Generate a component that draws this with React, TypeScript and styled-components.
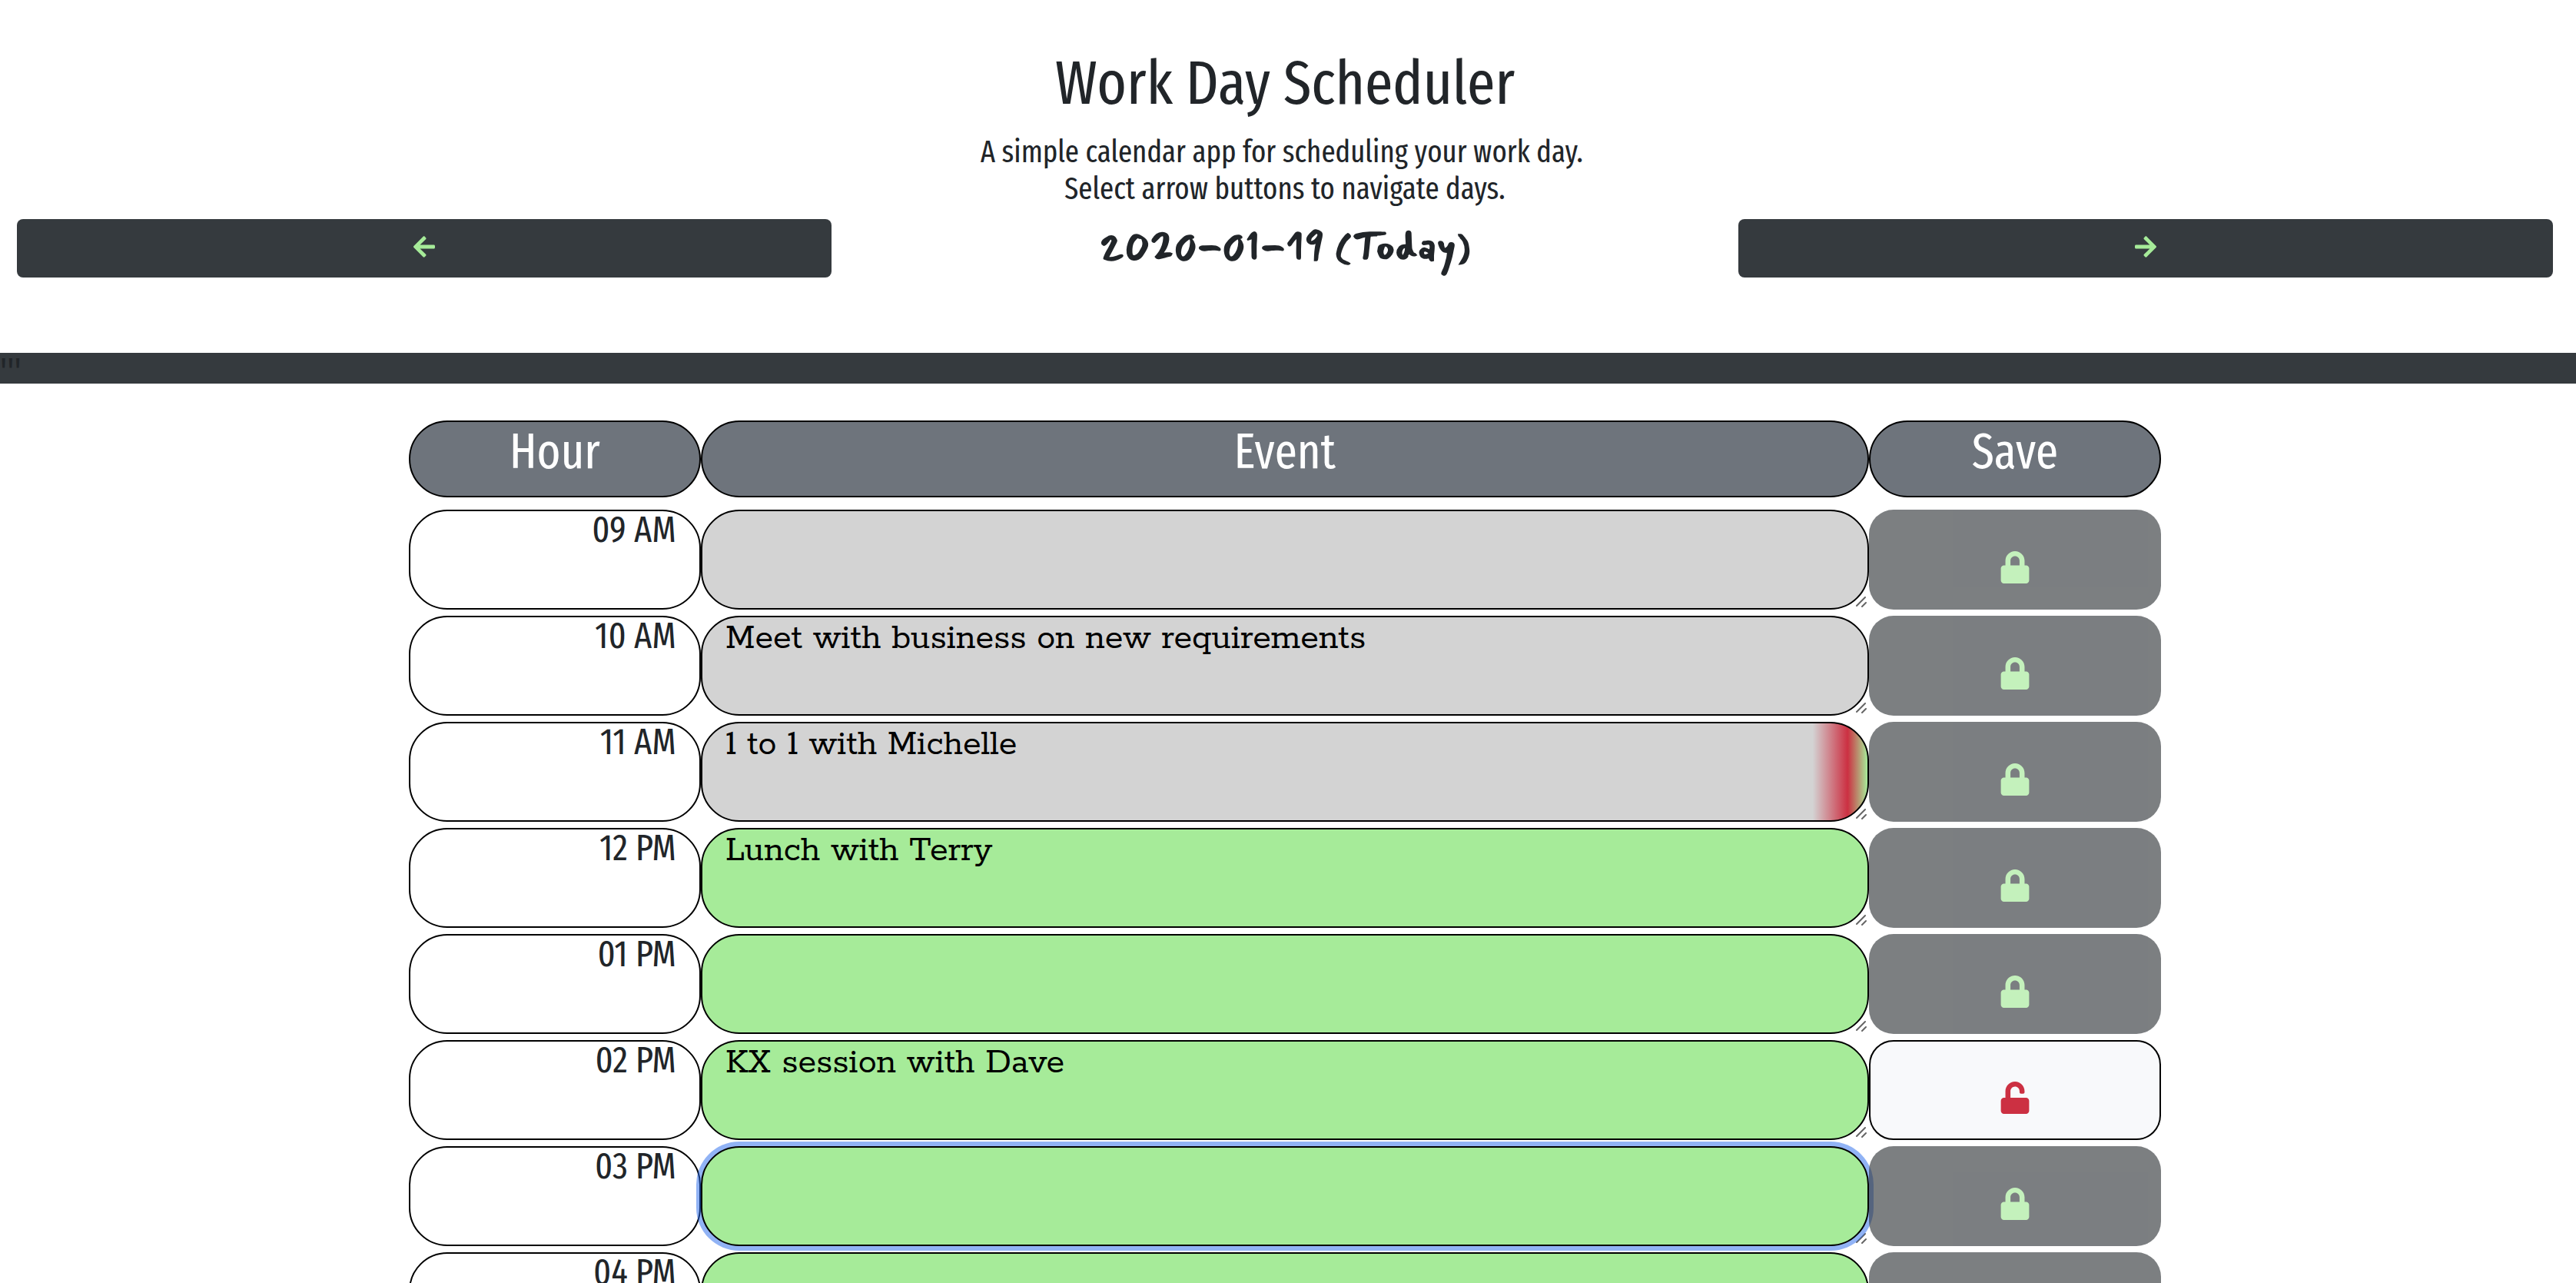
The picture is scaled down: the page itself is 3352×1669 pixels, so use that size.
import React, { useState } from "react";
import styled, { createGlobalStyle } from "styled-components";
import { FaArrowLeft, FaArrowRight, FaLock, FaUnlock } from "react-icons/fa";

const sans = `"Fira Sans Extra Condensed", "Fira Sans Condensed", "Noto Sans", sans-serif`;
const slab = `"Rokkitt", "DejaVu Serif", "Liberation Serif", serif`;
const script = `"Mansalva", "Lato", sans-serif`;

const ink = "#212529";
const dark = "#353a3e";
const slate = "#6e747c";
const past = "#d3d3d3";
const future = "#a6eb99";
const alert = "#cc3042";

const GlobalStyle = createGlobalStyle`
  *, *::before, *::after { box-sizing: border-box; }
  body {
    margin: 0;
    background: #fff;
    color: ${ink};
    font-family: ${sans};
    font-size: 32px;
    font-weight: 400;
  }
`;

const Page = styled.div`
  height: 100vh;
  overflow: hidden;
`;

const Header = styled.header`
  padding: 60px 30px 98px 22px;
  text-align: center;
`;

const Title = styled.h1`
  margin: 0 0 18px;
  font-size: 80px;
  font-weight: 400;
  line-height: 96px;
`;

const Lead = styled.p`
  margin: 0 0 15px;
  font-size: 40px;
  line-height: 48px;
`;

const DayNav = styled.nav`
  display: grid;
  grid-template-columns: repeat(3, minmax(0, 1fr));
  column-gap: 60px;
  align-items: center;
`;

const NavButton = styled.button`
  display: flex;
  align-items: center;
  justify-content: center;
  height: 76px;
  padding: 0 0 4px;
  border: 0;
  border-radius: 8px;
  background: ${dark};
  color: ${future};
  font-size: 32px;
  cursor: pointer;
`;

const CurrentDay = styled.p`
  margin: 0;
  height: 76px;
  font-family: ${script};
  font-size: 53px;
  font-weight: 700;
  line-height: 70px;
`;

const Divider = styled.div`
  height: 40px;
  background: ${dark};
  font-size: 48px;
  line-height: 48px;
`;

const Main = styled.main`
  padding: 48px 8px 0 0;
`;

const Schedule = styled.table`
  display: flex;
  flex-direction: column;
  gap: 16px;
  width: 100%;
  max-width: 2280px;
  margin: 0 auto;
`;

const Head = styled.thead`
  display: block;
`;

const Body = styled.tbody`
  display: flex;
  flex-direction: column;
  gap: 8px;
`;

const Row = styled.tr`
  display: grid;
  grid-template-columns: minmax(0, 2fr) minmax(0, 8fr) minmax(0, 2fr);
`;

const HeadCell = styled.th`
  height: 100px;
  padding: 0;
  border: 2px solid #000;
  border-radius: 50px;
  background: ${slate};
  color: #fff;
  font-size: 64px;
  font-weight: 400;
  line-height: 78px;
`;

const HourCell = styled.th`
  height: 130px;
  padding: 0 30px;
  border: 2px solid #000;
  border-radius: 50px;
  font-size: 48px;
  font-weight: 400;
  line-height: 48px;
  text-align: right;
`;

const Cell = styled.td`
  position: relative;
  height: 130px;
  padding: 0;
`;

const backgrounds = {
  past,
  current: `linear-gradient(to right, ${past} 95.3%, ${alert} 98.3%, ${future})`,
  future,
};

const EventText = styled.textarea<{ $when: keyof typeof backgrounds; $active?: boolean }>`
  position: relative;
  display: block;
  width: 100%;
  height: 130px;
  padding: 0 30px;
  border: 2px solid #000;
  border-radius: 50px;
  outline: 0;
  resize: none;
  overflow: hidden;
  background: ${(p) => backgrounds[p.$when]};
  box-shadow: ${(p) => (p.$active ? "0 0 0 6px rgba(35, 104, 235, 0.5)" : "none")};
  color: #000;
  font-family: ${slab};
  font-size: 48px;
  font-weight: 400;
  line-height: 56px;
`;

const Grip = styled.svg`
  position: absolute;
  right: 3px;
  bottom: 3px;
  width: 15px;
  height: 15px;
  fill: none;
  stroke: #666;
  stroke-width: 2;
  stroke-linecap: round;
`;

const SaveButton = styled.button<{ $unsaved?: boolean }>`
  display: flex;
  align-items: center;
  justify-content: center;
  width: 100%;
  height: 130px;
  padding: 20px 0 0;
  border: ${(p) => (p.$unsaved ? "2px solid #000" : "0")};
  border-radius: 32px;
  background: ${(p) => (p.$unsaved ? "#f8f9fb" : dark)};
  color: ${(p) => (p.$unsaved ? alert : future)};
  font-size: 42px;
  opacity: ${(p) => (p.$unsaved ? 1 : 0.65)};
`;

type Slot = {
  hour: string;
  event: string;
  when: keyof typeof backgrounds;
  unsaved?: boolean;
  active?: boolean;
};

const slots: Slot[] = [
  { hour: "09 AM", event: "", when: "past" },
  { hour: "10 AM", event: "Meet with business on new requirements", when: "past" },
  { hour: "11 AM", event: "1 to 1 with Michelle", when: "current" },
  { hour: "12 PM", event: "Lunch with Terry", when: "future" },
  { hour: "01 PM", event: "", when: "future" },
  { hour: "02 PM", event: "KX session with Dave", when: "future", unsaved: true },
  { hour: "03 PM", event: "", when: "future", active: true },
  { hour: "04 PM", event: "", when: "future" },
];

function SlotRow({ slot }: { slot: Slot }) {
  const [text, setText] = useState(slot.event);
  return (
    <Row>
      <HourCell scope="row">{slot.hour}</HourCell>
      <Cell>
        <Grip viewBox="0 0 15 15" aria-hidden="true">
          <path d="M2 13L13 2M9 14L14 9" />
        </Grip>
        <EventText
          aria-label={`Event at ${slot.hour}`}
          spellCheck={false}
          $when={slot.when}
          $active={slot.active}
          value={text}
          onChange={(e) => setText(e.target.value)}
        />
      </Cell>
      <Cell>
        <SaveButton aria-label={`Save ${slot.hour}`} disabled={!slot.unsaved} $unsaved={slot.unsaved}>
          {slot.unsaved ? <FaUnlock /> : <FaLock />}
        </SaveButton>
      </Cell>
    </Row>
  );
}

export default function App() {
  return (
    <Page>
      <GlobalStyle />
      <Header>
        <Title>Work Day Scheduler</Title>
        <Lead>
          A simple calendar app for scheduling your work day.&nbsp;
          <br />
          Select arrow buttons to navigate days.
        </Lead>
        <DayNav>
          <NavButton aria-label="Previous day">
            <FaArrowLeft />
          </NavButton>
          <CurrentDay>2020-01-19 (Today)</CurrentDay>
          <NavButton aria-label="Next day">
            <FaArrowRight />
          </NavButton>
        </DayNav>
      </Header>
      <Divider>'''</Divider>
      <Main>
        <Schedule>
          <Head>
            <Row>
              <HeadCell scope="col">Hour</HeadCell>
              <HeadCell scope="col">Event</HeadCell>
              <HeadCell scope="col">Save</HeadCell>
            </Row>
          </Head>
          <Body>
            {slots.map((slot) => (
              <SlotRow key={slot.hour} slot={slot} />
            ))}
          </Body>
        </Schedule>
      </Main>
    </Page>
  );
}
